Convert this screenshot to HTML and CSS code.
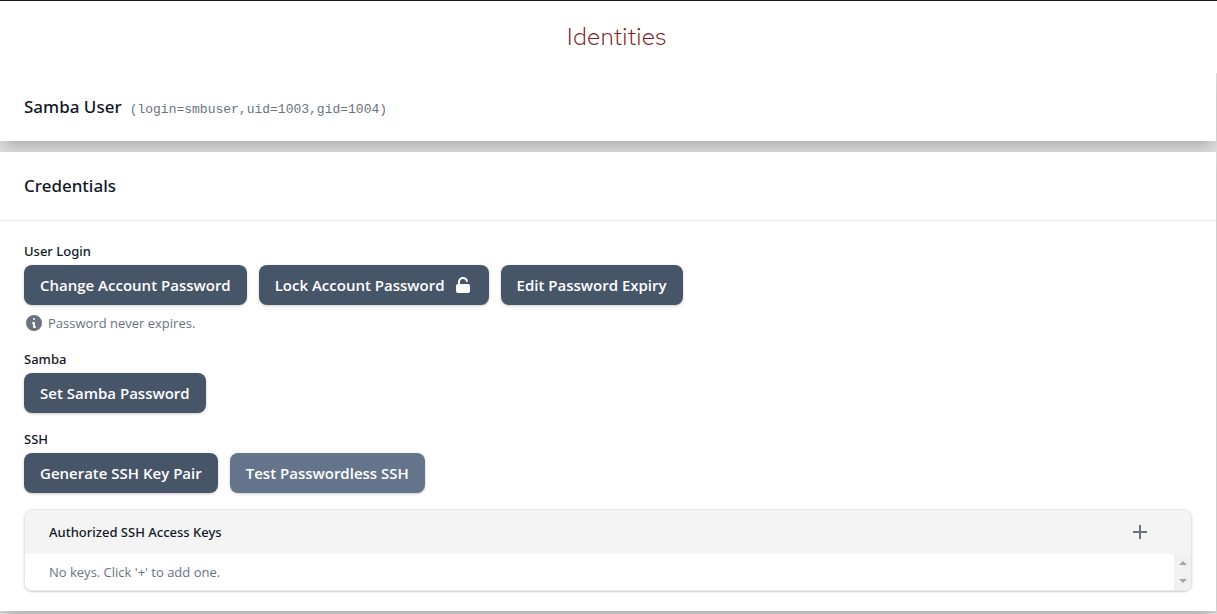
FILE: index.html
```html
<!DOCTYPE html>
<html lang="en">
<head>

	<meta charset="utf-8">
	<meta name="viewport" content="width=device-width, initial-scale=1">

	<title>Identities</title>

	<link rel="stylesheet" href="styles.css">

</head>
<body>

	<header class="page-header">
		<h1>Identities</h1>
	</header>

	<main class="content">

		<section class="card user">
			<h2>Samba User</h2>
			<span class="user-info">(login=smbuser,uid=1003,gid=1004)</span>
		</section>

		<section class="card">

			<div class="card-header">
				<h2>Credentials</h2>
			</div>

			<div class="card-body">

				<div class="group">
					<h3>User Login</h3>
					<div class="buttons">
						<button type="button" class="btn">Change Account Password</button>
						<button type="button" class="btn">
							Lock Account Password
							<svg class="icon-lock" viewBox="0 0 20 20" fill="currentColor" aria-hidden="true">
								<path d="M10 2a5 5 0 00-5 5v2a2 2 0 00-2 2v5a2 2 0 002 2h10a2 2 0 002-2v-5a2 2 0 00-2-2H7V7a3 3 0 015.905-.75 1 1 0 001.937-.5A5.002 5.002 0 0010 2z"/>
							</svg>
						</button>
						<button type="button" class="btn">Edit Password Expiry</button>
					</div>
					<p class="note">
						<svg class="icon-info" viewBox="0 0 20 20" fill="currentColor" aria-hidden="true">
							<path fill-rule="evenodd" d="M18 10a8 8 0 11-16 0 8 8 0 0116 0zm-7-4a1 1 0 11-2 0 1 1 0 012 0zM9 9a1 1 0 000 2v3a1 1 0 001 1h1a1 1 0 100-2v-3a1 1 0 00-1-1H9z"/>
						</svg>
						Password never expires.
					</p>
				</div>

				<div class="group">
					<h3>Samba</h3>
					<div class="buttons">
						<button type="button" class="btn">Set Samba Password</button>
					</div>
				</div>

				<div class="group">
					<h3>SSH</h3>
					<div class="buttons">
						<button type="button" class="btn">Generate SSH Key Pair</button>
						<button type="button" class="btn btn-light">Test Passwordless SSH</button>
					</div>
				</div>

				<div class="keys">
					<div class="keys-header">
						<h3>Authorized SSH Access Keys</h3>
						<button type="button" class="add" aria-label="Add key">
							<svg viewBox="0 0 20 20" fill="none" stroke="currentColor" stroke-width="2" aria-hidden="true">
								<path d="M10 3v14M3 10h14"/>
							</svg>
						</button>
					</div>
					<div class="keys-body">
						<p>No keys. Click '+' to add one.</p>
						<div class="scroll" aria-hidden="true">
							<span class="up"></span>
							<span class="down"></span>
						</div>
					</div>
				</div>

			</div>

		</section>

	</main>

</body>
</html>
```

FILE: styles.css
```css
* {
	box-sizing: border-box;
	margin: 0;
	padding: 0;
}

body {
	font: 14px/20px "Segoe UI", "Open Sans", "Noto Sans", sans-serif;
	color: #111827;
	background: #fff;
	border-top: 1px solid #18181b;
}

h1 {
	font: 300 25px/32px "Red Hat Text", Lato, sans-serif;
	color: #7f1d1d;
}

h2,
h3 {
	font-family: "Segoe UI", "Noto Sans", sans-serif;
	font-weight: 500;
}

h2 {
	font-size: 17px;
	line-height: 28px;
}

h3 {
	font-size: 13px;
	line-height: 20px;
}


.page-header {
	padding: 20px 0 20px 16px;
	text-align: center;
}

.content {
	display: flex;
	flex-direction: column;
	gap: 11px;
	padding: 0 1px 12px 0;
	background: #dadada;
}

.card {
	background: #fff;
	box-shadow: 0 8px 14px -6px rgba(0, 0, 0, .28);
}

.user {
	display: flex;
	align-items: baseline;
	gap: 8px;
	padding: 20px 24px;
}

.user-info {
	font: 13px/20px Consolas, "Liberation Mono", monospace;
	color: #6b7280;
}

.card-header {
	padding: 20px 24px;
	border-bottom: 1px solid #e5e5e5;
}

.card-body {
	display: flex;
	flex-direction: column;
	gap: 16px;
	padding: 20px 24px;
}


.buttons {
	display: flex;
	flex-wrap: wrap;
	gap: 12px;
	margin-top: 4px;
}

.btn {
	display: inline-flex;
	align-items: center;
	gap: 8px;
	padding: 8px 16px;
	font: 600 15px/24px "Segoe UI", "Open Sans", "Noto Sans", sans-serif;
	color: #fff;
	background: #475569;
	border: none;
	border-radius: 8px;
	box-shadow: 0 1px 3px rgba(0, 0, 0, .2);
	cursor: pointer;
}

.btn-light {
	background: #64748b;
}

.icon-lock,
.icon-info {
	width: 20px;
	height: 20px;
}

.note {
	display: flex;
	align-items: center;
	gap: 4px;
	margin-top: 8px;
	font-size: 13px;
	color: #6b7280;
}


.keys {
	overflow: hidden;
	border: 1px solid #e5e5e5;
	border-radius: 8px;
	box-shadow: 0 1px 2px rgba(0, 0, 0, .2);
}

.keys-header {
	display: flex;
	align-items: center;
	justify-content: space-between;
	padding: 12px 41px 12px 24px;
	background: #f4f4f4;
}

.add {
	width: 20px;
	height: 20px;
	color: #6b7280;
	background: none;
	border: none;
	cursor: pointer;
}

.add svg {
	display: block;
}

.keys-body {
	display: flex;
	justify-content: space-between;
}

.keys-body p {
	padding: 8px 24px;
	font-size: 13px;
	color: #6b7280;
}

.scroll {
	display: flex;
	flex-direction: column;
	align-items: center;
	justify-content: space-between;
	width: 17px;
	padding: 7px 0;
	background: #f1f1f1;
}

.up,
.down {
	border: 4px solid transparent;
}

.up {
	border-top: none;
	border-bottom-color: #a3a3a3;
}

.down {
	border-bottom: none;
	border-top-color: #a3a3a3;
}
```
